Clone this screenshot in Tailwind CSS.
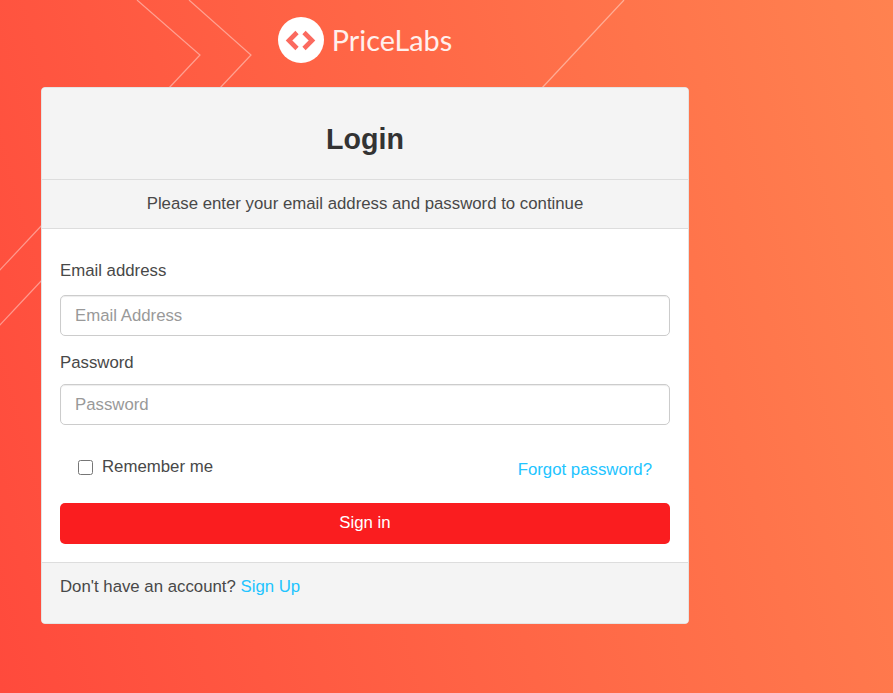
<!DOCTYPE html>
<html lang="en">
<head>
    <meta charset="UTF-8">
    <meta name="viewport" content="width=device-width, initial-scale=1.0">
    <title>Login - PriceLabs</title>
    <script src="https://cdn.jsdelivr.net/npm/@tailwindcss/browser@4"></script>
</head>
<body class="relative h-[693px] overflow-hidden bg-[linear-gradient(75deg,#ff4a3c,#ff8250)] font-['Liberation_Sans',Arial,sans-serif] text-[16.8px] text-[#484848]">
    <!-- background chevrons -->
    <svg class="absolute inset-0" width="893" height="693" fill="none" stroke="#ffffff" stroke-opacity="0.42" stroke-width="1.2">
        <path d="M137 0 L200 55 L168 89" />
        <path d="M189 0 L251 55 L219 89" />
        <path d="M624 0 L541 89" />
        <path d="M-1 271 L43 224" />
        <path d="M-1 326 L43 279" />
    </svg>

    <div class="relative">
        <header class="flex h-[87px] w-[730px] items-start justify-center pt-[17px]">
            <div class="flex items-center gap-[8px]">
                <div class="flex h-[46px] w-[46px] items-center justify-center rounded-full bg-white">
                    <svg width="32" height="24" viewBox="0 0 32 24" fill="none" stroke="#fb6a5f" stroke-width="4.6">
                        <path d="M12 4.5 L4 12.5 L12 20.5" />
                        <path d="M19 4.5 L27 12.5 L19 20.5" />
                    </svg>
                </div>
                <span class="font-['Lato',sans-serif] text-[28.8px] leading-[46px] text-white/90">PriceLabs</span>
            </div>
        </header>

        <main class="ml-[41px] w-[648px] overflow-hidden rounded-[4px] border border-[#e4e4e4] bg-white">
            <div class="flex h-[91px] items-center justify-center bg-[#f4f4f4] pt-[11px]">
                <h1 class="text-[28.6px] font-bold text-[#333]">Login</h1>
            </div>
            <div class="flex h-[50px] items-center justify-center border-y border-[#ddd] bg-[#f4f4f4]">
                <p>Please enter your email address and password to continue</p>
            </div>

            <form class="px-[18px] pt-[23px] pb-[18px]">
                <label class="block h-[43px] leading-[37px]">Email address</label>
                <input type="text" placeholder="Email Address" class="block h-[41px] w-full rounded-[5px] border border-[#ccc] px-[14px] text-[#444] shadow-[inset_0_1px_1px_rgba(0,0,0,0.075)] placeholder:text-[#999]">
                <label class="block h-[48px] leading-[54px]">Password</label>
                <input type="password" placeholder="Password" class="block h-[41px] w-full rounded-[5px] border border-[#ccc] px-[14px] text-[#444] shadow-[inset_0_1px_1px_rgba(0,0,0,0.075)] placeholder:text-[#999]">

                <div class="flex h-[78px] items-start justify-between pt-[32px] pr-[18px] pl-[18px]">
                    <label class="flex items-center gap-[9px] leading-[18px]">
                        <input type="checkbox" class="mt-[2px] h-[15px] w-[15px]">
                        <span class="mt-[1px]">Remember me</span>
                    </label>
                    <a href="#" class="mt-[4px] leading-[18px] text-[#22c4ff]">Forgot password?</a>
                </div>

                <button type="button" class="block h-[41px] w-full rounded-[5px] bg-[#fa1d1f] pb-[2px] text-white">Sign in</button>
            </form>

            <div class="h-[61px] border-t border-[#ddd] bg-[#f4f4f4] px-[18px] pt-[15px] leading-[18px]">
                Don't have an account? <a href="#" class="text-[#22c4ff]">Sign Up</a>
            </div>
        </main>
    </div>
</body>
</html>
